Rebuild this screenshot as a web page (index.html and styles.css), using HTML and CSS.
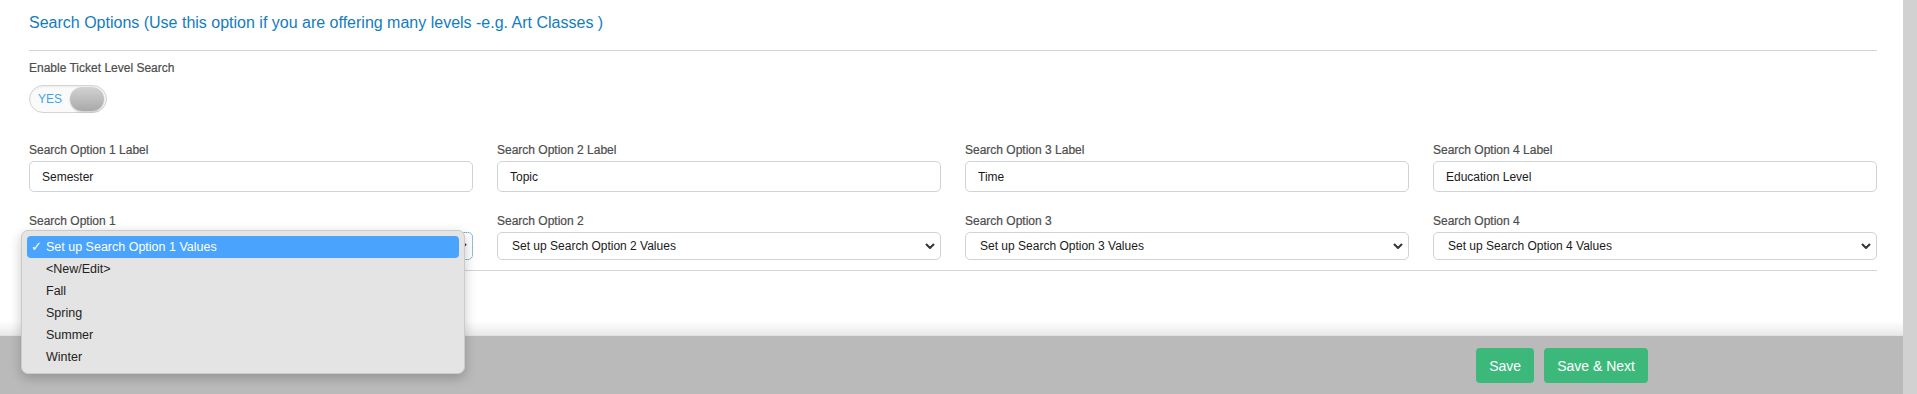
FILE: index.html
```html
<!DOCTYPE html>
<html lang="en">
<head>
  <meta charset="UTF-8" />
  <title>Search Options</title>
  <link rel="stylesheet" href="styles.css">
</head>
<body>

  <div class="window">
    <div class="main">
      <section class="card">
        <h2 class="section-title">Search Options (Use this option if you are offering many levels -e.g. Art Classes )</h2>

        <div class="enable-row">
          <label class="field-label">Enable Ticket Level Search</label>
          <div class="toggle">
            <span class="toggle-text">YES</span>
            <span class="toggle-knob"></span>
          </div>
        </div>

        <div class="options">
          <div class="field">
            <label class="field-label">Search Option 1 Label</label>
            <input class="text-input" type="text" value="Semester">
          </div>
          <div class="field">
            <label class="field-label">Search Option 2 Label</label>
            <input class="text-input" type="text" value="Topic">
          </div>
          <div class="field">
            <label class="field-label">Search Option 3 Label</label>
            <input class="text-input" type="text" value="Time">
          </div>
          <div class="field">
            <label class="field-label">Search Option 4 Label</label>
            <input class="text-input" type="text" value="Education Level">
          </div>

          <div class="field">
            <label class="field-label">Search Option 1</label>
            <div class="select-wrap">
              <select class="select-input focused">
                <option>Set up Search Option 1 Values</option>
              </select>
              <ul class="popup">
                <li class="popup-item selected"><span class="check">✓</span>Set up Search Option 1 Values</li>
                <li class="popup-item">&lt;New/Edit&gt;</li>
                <li class="popup-item">Fall</li>
                <li class="popup-item">Spring</li>
                <li class="popup-item">Summer</li>
                <li class="popup-item">Winter</li>
              </ul>
            </div>
          </div>
          <div class="field">
            <label class="field-label">Search Option 2</label>
            <select class="select-input">
              <option>Set up Search Option 2 Values</option>
            </select>
          </div>
          <div class="field">
            <label class="field-label">Search Option 3</label>
            <select class="select-input">
              <option>Set up Search Option 3 Values</option>
            </select>
          </div>
          <div class="field">
            <label class="field-label">Search Option 4</label>
            <select class="select-input">
              <option>Set up Search Option 4 Values</option>
            </select>
          </div>
        </div>
      </section>

      <footer class="footer">
        <button class="btn-save">Save</button>
        <button class="btn-save">Save &amp; Next</button>
      </footer>
    </div>
    <div class="scroll-track"></div>
  </div>

</body>
</html>
```

FILE: styles.css
```css
html, body {
  margin: 0;
  padding: 0;
  height: 100%;
  overflow: hidden;
  background: #fff;
  font-family: 'Liberation Sans', Arial, sans-serif;
  color: #222;
}

.window {
  display: flex;
  height: 100%;
}

.main {
  flex: 1;
  display: flex;
  flex-direction: column;
}

.card {
  height: 335px;
  box-sizing: border-box;
  padding: 0 26px 0 29px;
  background: linear-gradient(to bottom, #fff calc(100% - 14px), #e9e9e9);
}

.section-title {
  margin: 14px 0 18px;
  font-size: 16px;
  line-height: 18px;
  font-weight: normal;
  color: #137cc0;
}

.enable-row {
  border-top: 1px solid #d3d3d3;
  padding-top: 10px;
}

.field-label {
  display: block;
  font-size: 12px;
  line-height: 14px;
  color: #4d4d4d;
  margin-bottom: 4px;
  -webkit-text-stroke: 0.2px #4d4d4d;
}

.enable-row .field-label {
  margin-bottom: 10px;
}

.toggle {
  width: 78px;
  height: 28px;
  box-sizing: border-box;
  border: 1px solid #d4d4d4;
  border-radius: 14px;
  background: #fafafa;
  box-shadow: inset 0 1px 2px rgba(0, 0, 0, 0.06);
  display: flex;
  align-items: center;
  justify-content: space-between;
  padding: 0 2px 0 8px;
}

.toggle-text {
  font-size: 12px;
  color: #3aa5ec;
}

.toggle-knob {
  width: 34px;
  height: 24px;
  border-radius: 12px;
  background: linear-gradient(to bottom, #d2d2d2, #a9a9a9);
  box-shadow: 0 1px 2px rgba(0, 0, 0, 0.2);
}

.options {
  margin-top: 30px;
  padding-bottom: 10px;
  border-bottom: 1px solid #d3d3d3;
  display: grid;
  grid-template-columns: repeat(4, 1fr);
  column-gap: 24px;
  row-gap: 22px;
}

.text-input, .select-input {
  display: block;
  width: 100%;
  box-sizing: border-box;
  border: 1px solid #ced3d9;
  border-radius: 5px;
  background-color: #fff;
  font-family: 'Liberation Sans', Arial, sans-serif;
  font-size: 12px;
  color: #1a1a1a;
  margin: 0;
}

.text-input {
  height: 31px;
  padding: 0 12px;
}

.select-input {
  height: 28px;
  padding: 0 30px 0 14px;
  appearance: none;
  -webkit-appearance: none;
  background-image: url("data:image/svg+xml,%3Csvg xmlns='http://www.w3.org/2000/svg' width='10' height='6' viewBox='0 0 10 6'%3E%3Cpath d='M1 1l4 4 4-4' fill='none' stroke='%23333' stroke-width='2'/%3E%3C/svg%3E");
  background-repeat: no-repeat;
  background-position: right 5px center;
  background-size: 10px 6px;
}

.select-input.focused {
  outline: 1px dotted #5aaae4;
  outline-offset: -1px;
}

.select-wrap {
  position: relative;
}

.popup {
  position: absolute;
  top: -2px;
  left: -8px;
  width: 444px;
  box-sizing: border-box;
  margin: 0;
  padding: 5px;
  list-style: none;
  background: #e4e4e4;
  border: 1px solid #cbcbcb;
  border-radius: 7px;
  box-shadow: 0 4px 12px rgba(0, 0, 0, 0.22);
  z-index: 5;
}

.popup-item {
  position: relative;
  height: 22px;
  line-height: 22px;
  padding-left: 19px;
  font-size: 12.5px;
  color: #222;
  border-radius: 4px;
}

.popup-item.selected {
  background: #4aa3fd;
  color: #fff;
}

.check {
  position: absolute;
  left: 4px;
  top: 0;
  font-family: 'DejaVu Sans', sans-serif;
  font-size: 13px;
}

.footer {
  flex: 1;
  background: #bababa;
  border-top: 1px solid #e2e2e2;
  display: flex;
  justify-content: flex-end;
  align-items: flex-start;
  gap: 10px;
  padding: 12px 255px 0 0;
}

.btn-save {
  height: 35px;
  padding: 0 13px;
  border: none;
  border-radius: 4px;
  background: #3cb97a;
  color: #fff;
  font-family: 'Liberation Sans', Arial, sans-serif;
  font-size: 14px;
  cursor: pointer;
}

.scroll-track {
  width: 14px;
  background: #d1d1d1;
}
```
